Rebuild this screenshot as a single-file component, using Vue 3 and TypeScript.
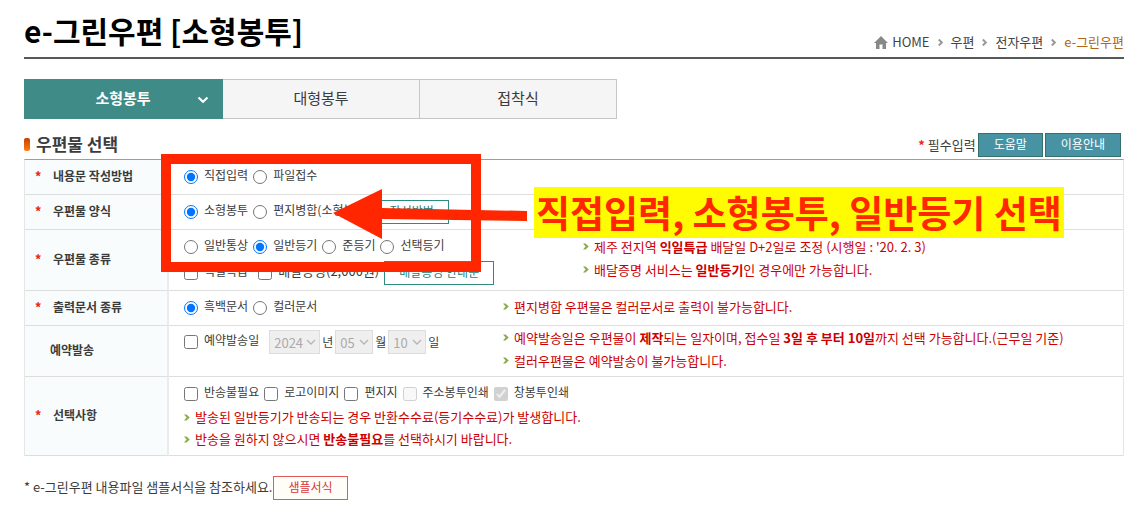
<script setup lang="ts">
import { ref } from 'vue'

interface Option {
  value: string
  label: string
  checked?: boolean
  disabled?: boolean
}

const crumbs: string[] = ['우편', '전자우편']
const tabs: string[] = ['소형봉투', '대형봉투', '접착식']
const activeTab = ref('소형봉투')

const writeMethod = ref('direct')
const writeMethods: Option[] = [
  { value: 'direct', label: '직접입력' },
  { value: 'file', label: '파일접수' },
]

const form = ref('small')
const forms: Option[] = [
  { value: 'small', label: '소형봉투' },
  { value: 'merge', label: '편지병합(소형봉투)' },
]

const mailType = ref('registered')
const mailTypes: Option[] = [
  { value: 'normal', label: '일반통상' },
  { value: 'registered', label: '일반등기' },
  { value: 'semi', label: '준등기' },
  { value: 'optional', label: '선택등기' },
]

const printType = ref('mono')
const printTypes: Option[] = [
  { value: 'mono', label: '흑백문서' },
  { value: 'color', label: '컬러문서' },
]

const extras: Option[] = [
  { value: 'noreturn', label: '반송불필요' },
  { value: 'logo', label: '로고이미지' },
  { value: 'letter', label: '편지지' },
  { value: 'address', label: '주소봉투인쇄', disabled: true },
  { value: 'window', label: '창봉투인쇄', checked: true, disabled: true },
]

const dateParts = [
  { value: '2024', unit: '년', cls: 'year' },
  { value: '05', unit: '월', cls: 'short' },
  { value: '10', unit: '일', cls: 'short' },
]
</script>

<template>
  <main class="page">
    <header class="head">
      <h1>e-그린우편 [소형봉투]</h1>
      <nav class="crumbs" aria-label="현재 위치">
        <a href="#" class="home">
          <svg width="14" height="13" viewBox="0 0 14 13" aria-hidden="true">
            <path d="M7 0 L14 7 L12 7 L12 13 L8.5 13 L8.5 8.5 L5.5 8.5 L5.5 13 L2 13 L2 7 L0 7 Z" fill="#888" />
          </svg>
          HOME
        </a>
        <template v-for="c in crumbs" :key="c">
          <svg class="sep" width="5" height="7" viewBox="0 0 5 7" aria-hidden="true">
            <path d="M0.8 0.5 L3.8 3.5 L0.8 6.5" fill="none" stroke="#999" stroke-width="2" />
          </svg>
          <a href="#">{{ c }}</a>
        </template>
        <svg class="sep" width="5" height="7" viewBox="0 0 5 7" aria-hidden="true">
          <path d="M0.8 0.5 L3.8 3.5 L0.8 6.5" fill="none" stroke="#999" stroke-width="2" />
        </svg>
        <a href="#" class="current">e-그린우편</a>
      </nav>
    </header>

    <nav class="tabs">
      <button
        v-for="t in tabs"
        :key="t"
        type="button"
        class="tab"
        :class="{ active: t === activeTab }"
        @click="activeTab = t"
      >
        {{ t }}
        <svg v-if="t === activeTab" class="tab-arrow" width="12" height="8" viewBox="0 0 12 8" aria-hidden="true">
          <path d="M1.5 1.5 L6 5.8 L10.5 1.5" fill="none" stroke="#fff" stroke-width="2.2" />
        </svg>
      </button>
    </nav>

    <section class="bar">
      <h2><i class="bullet"></i>우편물 선택</h2>
      <div class="bar-right">
        <span class="required"><b class="star">*</b> 필수입력</span>
        <button type="button" class="btn solid">도움말</button>
        <button type="button" class="btn solid">이용안내</button>
      </div>
    </section>

    <table class="grid">
      <tbody>
        <tr class="row">
          <th scope="row"><b class="star">*</b>내용문 작성방법</th>
          <td>
            <div class="line">
              <label v-for="o in writeMethods" :key="o.value" class="opt">
                <input v-model="writeMethod" type="radio" name="writeMethod" :value="o.value" /><span>{{ o.label }}</span>
              </label>
            </div>
          </td>
        </tr>
        <tr class="row">
          <th scope="row"><b class="star">*</b>우편물 양식</th>
          <td>
            <div class="line">
              <label v-for="o in forms" :key="o.value" class="opt">
                <input v-model="form" type="radio" name="form" :value="o.value" /><span>{{ o.label }}</span>
              </label>
              <button type="button" class="btn outline">작성방법</button>
            </div>
          </td>
        </tr>
        <tr class="row tall">
          <th scope="row"><b class="star">*</b>우편물 종류</th>
          <td>
            <div class="split">
              <div class="left wide">
                <div class="line first">
                  <label v-for="o in mailTypes" :key="o.value" class="opt">
                    <input v-model="mailType" type="radio" name="mailType" :value="o.value" /><span>{{ o.label }}</span>
                  </label>
                </div>
                <div class="line">
                  <label class="opt spaced"><input type="checkbox" /><span>익일특급</span></label>
                  <label class="opt large"><input type="checkbox" /><span>배달증명(2,000원)</span></label>
                  <button type="button" class="btn outline">배달증명 안내문</button>
                </div>
              </div>
              <ul class="notes side">
                <li><svg class="mark" width="6" height="7" viewBox="0 0 6 7" aria-hidden="true"><path d="M0 0.5 H2.5 L5.8 3.5 L2.5 6.5 H0 L2.6 3.5 Z" fill="#8aad4b" /></svg>제주 전지역 <b>익일특급</b> 배달일 D+2일로 조정 (시행일 : '20. 2. 3)</li>
                <li><svg class="mark" width="6" height="7" viewBox="0 0 6 7" aria-hidden="true"><path d="M0 0.5 H2.5 L5.8 3.5 L2.5 6.5 H0 L2.6 3.5 Z" fill="#8aad4b" /></svg>배달증명 서비스는 <b>일반등기</b>인 경우에만 가능합니다.</li>
              </ul>
            </div>
          </td>
        </tr>
        <tr class="row">
          <th scope="row"><b class="star">*</b>출력문서 종류</th>
          <td>
            <div class="split">
              <div class="left">
                <div class="line">
                  <label v-for="o in printTypes" :key="o.value" class="opt">
                    <input v-model="printType" type="radio" name="printType" :value="o.value" /><span>{{ o.label }}</span>
                  </label>
                </div>
              </div>
              <ul class="notes side">
                <li><svg class="mark" width="6" height="7" viewBox="0 0 6 7" aria-hidden="true"><path d="M0 0.5 H2.5 L5.8 3.5 L2.5 6.5 H0 L2.6 3.5 Z" fill="#8aad4b" /></svg>편지병합 우편물은 컬러문서로 출력이 불가능합니다.</li>
              </ul>
            </div>
          </td>
        </tr>
        <tr class="row mid">
          <th scope="row" class="plain">예약발송</th>
          <td>
            <div class="split">
              <div class="left">
                <div class="line dates">
                  <label class="opt spaced"><input type="checkbox" /><span>예약발송일</span></label>
                  <template v-for="d in dateParts" :key="d.unit">
                    <span class="pick" :class="d.cls">
                      <select disabled :aria-label="d.unit"><option>{{ d.value }}</option></select>
                      <svg width="10" height="6" viewBox="0 0 10 6" aria-hidden="true">
                        <path d="M1 1 L5 5 L9 1" fill="none" stroke="#b5b5b5" stroke-width="1.3" />
                      </svg>
                    </span>
                    <span class="unit">{{ d.unit }}</span>
                  </template>
                </div>
              </div>
              <ul class="notes side">
                <li><svg class="mark" width="6" height="7" viewBox="0 0 6 7" aria-hidden="true"><path d="M0 0.5 H2.5 L5.8 3.5 L2.5 6.5 H0 L2.6 3.5 Z" fill="#8aad4b" /></svg>예약발송일은 우편물이 <b>제작</b>되는 일자이며, 접수일 <b>3일 후 부터 10일</b>까지 선택 가능합니다.(근무일 기준)</li>
                <li><svg class="mark" width="6" height="7" viewBox="0 0 6 7" aria-hidden="true"><path d="M0 0.5 H2.5 L5.8 3.5 L2.5 6.5 H0 L2.6 3.5 Z" fill="#8aad4b" /></svg>컬러우편물은 예약발송이 불가능합니다.</li>
              </ul>
            </div>
          </td>
        </tr>
        <tr class="row last">
          <th scope="row"><b class="star">*</b>선택사항</th>
          <td>
            <div class="line">
              <label v-for="o in extras" :key="o.value" class="opt">
                <input type="checkbox" :checked="o.checked" :disabled="o.disabled" /><span>{{ o.label }}</span>
              </label>
            </div>
            <ul class="notes below">
              <li><svg class="mark" width="6" height="7" viewBox="0 0 6 7" aria-hidden="true"><path d="M0 0.5 H2.5 L5.8 3.5 L2.5 6.5 H0 L2.6 3.5 Z" fill="#8aad4b" /></svg>발송된 일반등기가 반송되는 경우 반환수수료(등기수수료)가 발생합니다.</li>
              <li><svg class="mark" width="6" height="7" viewBox="0 0 6 7" aria-hidden="true"><path d="M0 0.5 H2.5 L5.8 3.5 L2.5 6.5 H0 L2.6 3.5 Z" fill="#8aad4b" /></svg>반송을 원하지 않으시면 <b>반송불필요</b>를 선택하시기 바랍니다.</li>
            </ul>
          </td>
        </tr>
      </tbody>
    </table>

    <footer class="foot">
      <span>* e-그린우편 내용파일 샘플서식을 참조하세요.</span>
      <button type="button" class="btn sample">샘플서식</button>
    </footer>

    <div class="frame"></div>
    <svg class="arrow" width="196" height="52" viewBox="0 0 196 52" aria-hidden="true">
      <path d="M1 25 L50 1 L50 20 L195 23 L195 33 L50 31 L50 51 Z" fill="#ff2600" />
    </svg>
    <p class="callout">직접입력, 소형봉투, 일반등기 선택</p>
  </main>
</template>

<style>
body {
  background: #fff;
}
</style>

<style scoped>
.page {
  position: relative;
  box-sizing: border-box;
  padding: 8px 22px 6px 24px;
  font-family: "Noto Sans CJK KR", sans-serif;
  font-size: 13px;
  line-height: 20px;
  color: #3c3c3c;
  white-space: nowrap;
}
h1,
h2,
p,
ul {
  margin: 0;
  padding: 0;
}
button,
select {
  font-family: inherit;
}
a {
  color: #444;
  text-decoration: none;
}
.head {
  display: flex;
  justify-content: space-between;
  align-items: flex-end;
  height: 49px;
  border-bottom: 2px solid #555957;
}
h1 {
  padding-bottom: 4px;
  font-size: 30px;
  line-height: 46px;
  font-weight: 700;
  color: #000;
}
.crumbs {
  display: flex;
  align-items: center;
  padding-bottom: 5px;
}
.home {
  display: flex;
  align-items: center;
  gap: 4px;
}
.sep {
  margin: 0 8px;
}
.crumbs .current {
  color: #b0651b;
}
.tabs {
  display: flex;
  margin-top: 20px;
}
.tab {
  position: relative;
  width: 197px;
  height: 40px;
  padding: 0 0 2px;
  border: 1px solid #c6c6c6;
  border-left: 0;
  background: #f5f5f5;
  color: #3c3c3c;
  font-size: 15px;
  line-height: 36px;
}
.tab.active {
  width: 199px;
  border-color: #3f8b87;
  background: #3f8b87;
  color: #fff;
  font-weight: 700;
}
.tab-arrow {
  position: absolute;
  right: 13px;
  top: 16px;
}
.bar {
  display: flex;
  justify-content: space-between;
  align-items: flex-end;
  height: 40px;
}
h2 {
  display: flex;
  align-items: center;
  gap: 6px;
  font-size: 17px;
  line-height: 30px;
  color: #3c3c3c;
}
.bullet {
  width: 6px;
  height: 13px;
  border-radius: 2px;
  background: linear-gradient(#c84000, #ff7f11);
}
.bar-right {
  display: flex;
  align-items: center;
  gap: 2px;
  padding: 0 3px 2px 0;
}
.star {
  color: #e52b20;
}
.btn {
  box-sizing: border-box;
  height: 24px;
  padding: 0 14px 2px;
  border: 1px solid;
  font-size: 12px;
  line-height: 20px;
}
.solid {
  padding: 0 15px 2px;
  border-color: #35716c;
  background: #4793a4;
  color: #fff;
}
.outline {
  border-color: #2e8b81;
  background: #fff;
  color: #1f7f76;
}
.sample {
  border-color: #e0595b;
  background: #fffdf8;
  color: #d9363a;
}
.grid {
  width: 100%;
  border-collapse: separate;
  border-spacing: 0;
  border-top: 1px solid #8ba59f;
  border-left: 1px solid #e6e6e6;
  border-right: 1px solid #e6e6e6;
}
.row {
  height: 35px;
}
.row.tall {
  height: 61px;
}
.row.mid {
  height: 51px;
}
.row.last {
  height: 79px;
}
th,
td {
  box-sizing: border-box;
  border-bottom: 1px solid #dedede;
  padding: 0;
  text-align: left;
}
th {
  width: 144px;
  padding-left: 10px;
  padding-bottom: 2px;
  border-right: 2px solid #ececec;
  background: #f8fcfd;
  font-size: 12px;
  font-weight: 700;
}
th .star {
  display: inline-block;
  width: 18px;
}
th.plain {
  padding-left: 25px;
}
td {
  padding-left: 15px;
}
.line {
  display: flex;
  align-items: center;
  height: 24px;
}
.line.first {
  margin-bottom: 2px;
}
.line.dates {
  margin-bottom: 18px;
}
.opt {
  display: flex;
  align-items: center;
  margin-right: 5px;
  font-size: 12px;
}
.opt span {
  padding-bottom: 4px;
}
.opt.spaced {
  margin-right: 10px;
}
.opt.large {
  font-size: 13px;
}
.opt input {
  width: 14px;
  height: 14px;
  margin: 0 6px 0 0;
}
.split {
  display: flex;
  align-items: center;
}
.left {
  flex: 0 0 319px;
}
.left.wide {
  flex-basis: 399px;
}
.notes {
  list-style: none;
  color: #c00;
  line-height: 23px;
}
.notes.side {
  padding-bottom: 4px;
}
.notes li {
  display: flex;
  align-items: center;
  white-space: pre;
}
.notes.below {
  line-height: 22px;
}
.mark {
  margin-right: 5px;
}
.pick {
  position: relative;
  display: flex;
}
.pick.year {
  width: 51px;
}
.pick.short {
  width: 38px;
}
.pick select {
  appearance: none;
  width: 100%;
  height: 24px;
  padding: 0 0 0 4px;
  border: 1px solid #ddd;
  border-radius: 0;
  background: #efefef;
  color: #aaa;
  font-size: 13px;
  opacity: 1;
}
.pick svg {
  position: absolute;
  right: 4px;
  top: 9px;
}
.unit {
  margin: 0 2px;
  font-size: 12px;
}
.foot {
  display: flex;
  align-items: center;
  gap: 1px;
  margin-top: 20px;
}
.foot span {
  padding-bottom: 3px;
}
.frame {
  position: absolute;
  left: 161px;
  top: 154px;
  box-sizing: border-box;
  width: 320px;
  height: 118px;
  border: 10px solid #ff2600;
}
.arrow {
  position: absolute;
  left: 332px;
  top: 188px;
}
.callout {
  position: absolute;
  left: 534px;
  top: 187px;
  padding: 0 2px;
  background: #fffb00;
  color: #ff2600;
  font-size: 37px;
  line-height: 51px;
  font-weight: 700;
}
</style>
